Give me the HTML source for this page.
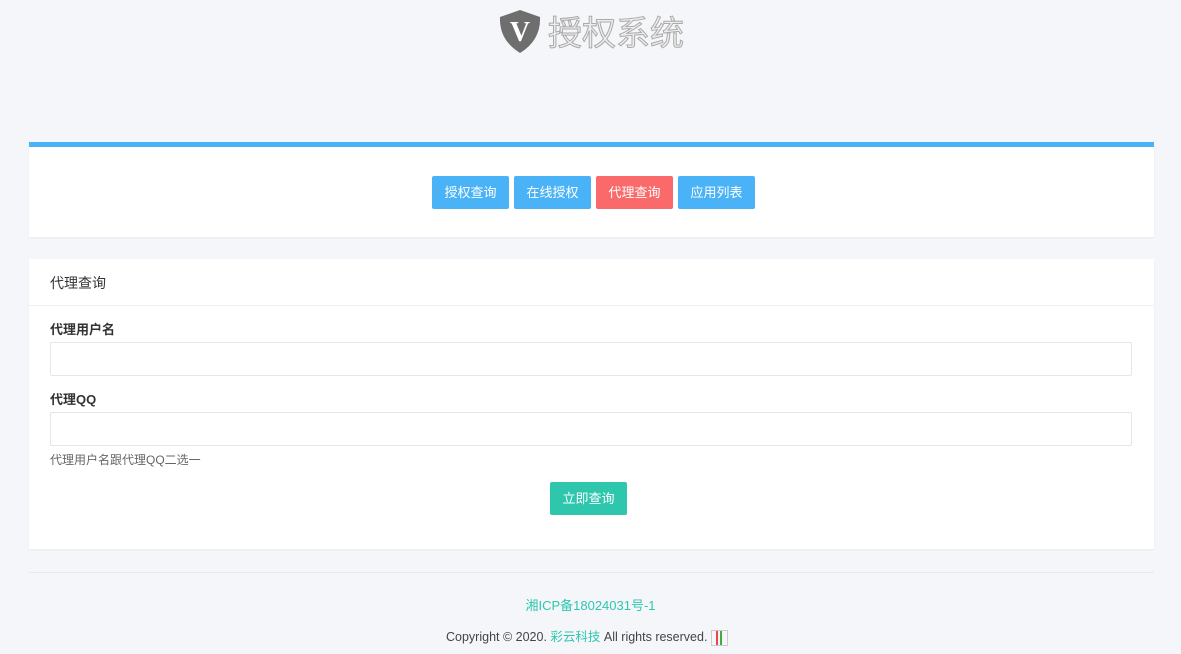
<!DOCTYPE html>
<html><head><meta charset="utf-8"><style>
*{box-sizing:border-box;margin:0;padding:0}
body{width:1181px;height:654px;background:#f5f6fa;font-family:"Liberation Sans","Noto Sans CJK SC",sans-serif;font-size:13px;color:#555;position:relative;overflow:hidden}
.logo{position:absolute;left:497px;top:6px;display:flex;align-items:center}
.logo span{font-size:34px;margin-left:5px;letter-spacing:0px;-webkit-text-stroke:1px #aaa;color:#eee}
.card1{position:absolute;left:29px;top:142px;width:1125px;height:95px;background:#fff;border-top:5px solid #4ab3f7;box-shadow:0 1px 2px rgba(0,0,0,.05)}
.btns{position:absolute;left:403px;top:29px;display:flex;gap:5px}
.btn{height:33px;line-height:33px;width:77px;text-align:center;color:#fff;font-size:13px;border-radius:2px;background:#4ab3f7}
.card2{position:absolute;left:29px;top:259px;width:1125px;height:290px;background:#fff;box-shadow:0 1px 2px rgba(0,0,0,.05)}
.hd{height:47px;border-bottom:1px solid #f0f0f0;padding:14px 21px;font-size:14px;color:#333}
label{position:absolute;left:21px;font-weight:bold;font-size:13px;color:#333}
.inp{position:absolute;left:21px;width:1082px;height:34px;border:1px solid #e6e6e6;border-radius:2px}
.foot{position:absolute;left:29px;top:572px;width:1125px;border-top:1px solid #eaeaea}
</style></head><body>
<div class="logo">
<svg width="46" height="46" viewBox="0 0 46 46"><path d="M23 2 L43 9 Q44 32 23 45 Q2 32 3 9 Z" fill="#6e6e6e"/><text x="23" y="33" font-family="Liberation Serif" font-weight="bold" font-size="28" fill="#fff" text-anchor="middle">V</text></svg>
<span>授权系统</span></div>
<div class="card1"><div class="btns">
<div class="btn">授权查询</div><div class="btn">在线授权</div><div class="btn" style="background:#fa6a6a">代理查询</div><div class="btn">应用列表</div></div></div>
<div class="card2">
<div class="hd">代理查询</div>
<label style="top:60px">代理用户名</label>
<div class="inp" style="top:83px"></div>
<label style="top:130px">代理QQ</label>
<div class="inp" style="top:153px"></div>
<div style="position:absolute;left:21px;top:192px;font-size:12px;color:#666">代理用户名跟代理QQ二选一</div>
<div class="btn" style="position:absolute;left:521px;top:223px;background:#2ec7ae">立即查询</div>
</div>
<div class="foot"></div>
<div style="position:absolute;left:0;width:1181px;top:595px;text-align:center;color:#2ec7ae">湘ICP备18024031号-1</div>
<div style="position:absolute;left:446px;top:626px;color:#444;font-size:12.5px">Copyright © 2020. <span style="color:#2ec7ae">彩云科技</span> All rights reserved. <span style="display:inline-block;width:17px;height:16px;border:1px solid #ccc;vertical-align:middle;background:linear-gradient(90deg,transparent 4px,#e44 4px,#e44 6px,transparent 6px,transparent 8px,#4a4 8px,#4a4 10px,transparent 10px)"></span></div>
</body></html>
